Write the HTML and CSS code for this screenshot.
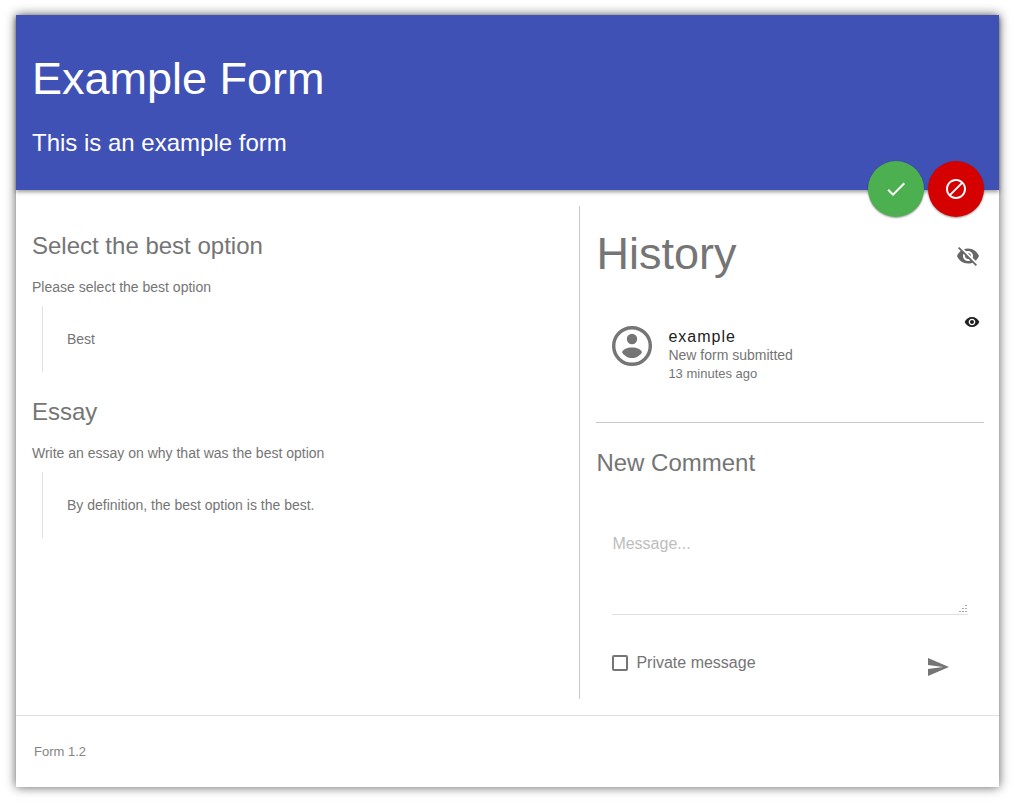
FILE: index.html
```html
<!DOCTYPE html>
<html lang="en">
<head>
<meta charset="utf-8">
<title>Example Form</title>
<link rel="stylesheet" href="styles.css">
</head>
<body>
<main class="card">
  <header class="banner">
    <h1>Example Form</h1>
    <p class="subtitle">This is an example form</p>
    <div class="actions">
      <button class="fab approve" aria-label="Approve"><svg viewBox="0 0 24 24"><path d="M9 16.17L4.83 12l-1.42 1.41L9 19 21 7l-1.41-1.41z"/></svg></button>
      <button class="fab deny" aria-label="Deny"><svg viewBox="0 0 24 24"><path d="M12 2C6.48 2 2 6.48 2 12s4.48 10 10 10 10-4.48 10-10S17.520 2 12 2zM4 12c0-4.420 3.580-8 8-8 1.850 0 3.550.630 4.900 1.690L5.690 16.900C4.630 15.550 4 13.850 4 12zm8 8c-1.850 0-3.550-.630-4.900-1.690L18.310 7.100C19.370 8.450 20 10.150 20 12c0 4.420-3.580 8-8 8z"/></svg></button>
    </div>
  </header>
  <div class="content">
    <div class="answers">
      <section class="question">
        <h2>Select the best option</h2>
        <p>Please select the best option</p>
        <blockquote>Best</blockquote>
      </section>
      <section class="question">
        <h2>Essay</h2>
        <p>Write an essay on why that was the best option</p>
        <blockquote>By definition, the best option is the best.</blockquote>
      </section>
    </div>
    <aside class="history">
      <div class="history-head">
        <h2 class="display">History</h2>
        <button class="icon-button" aria-label="Hide private events"><svg viewBox="0 0 24 24"><path d="M12 7c2.760 0 5 2.240 5 5 0 .650-.130 1.260-.360 1.830l2.920 2.920c1.510-1.260 2.700-2.890 3.430-4.750-1.730-4.390-6-7.500-11-7.500-1.400 0-2.740.250-3.980.700l2.160 2.160C10.740 7.130 11.350 7 12 7zM2 4.270l2.280 2.280.460.460C3.080 8.300 1.780 10.020 1 12c1.730 4.390 6 7.500 11 7.500 1.550 0 3.030-.300 4.380-.840l.420.420L19.730 22 21 20.730 3.270 3 2 4.270zM7.530 9.800l1.550 1.550c-.050.210-.080.430-.080.650 0 1.660 1.340 3 3 3 .220 0 .440-.030.650-.080l1.550 1.550c-.670.330-1.410.530-2.200.530-2.760 0-5-2.240-5-5 0-.790.200-1.530.530-2.200zm4.310-.780l3.150 3.150.020-.160c0-1.660-1.340-3-3-3l-.170.010z"/></svg></button>
      </div>
      <article class="event">
        <svg class="avatar" viewBox="0 0 40 40" aria-hidden="true"><circle cx="20" cy="20" r="18.300" fill="none" stroke="currentColor" stroke-width="3.400"/><circle cx="20" cy="13" r="5.200"/><path d="M20 21.500c5 0 9 2 10 4.700-2 3.500-6 5.800-10 5.800s-8-2.300-10-5.800c1-2.700 5-4.700 10-4.700z"/></svg>
        <div class="event-text">
          <h3>example</h3>
          <p class="event-title">New form submitted</p>
          <p class="event-time">13 minutes ago</p>
        </div>
        <svg class="visibility" viewBox="0 0 24 24" role="img" aria-label="Visible"><path d="M12 4.500C7 4.500 2.730 7.610 1 12c1.730 4.390 6 7.500 11 7.500s9.270-3.110 11-7.500c-1.730-4.390-6-7.500-11-7.500zM12 17c-2.760 0-5-2.240-5-5s2.240-5 5-5 5 2.240 5 5-2.240 5-5 5zm0-8c-1.660 0-3 1.340-3 3s1.340 3 3 3 3-1.340 3-3-1.340-3-3-3z"/></svg>
      </article>
      <form class="comment">
        <h2>New Comment</h2>
        <textarea placeholder="Message..." aria-label="Message"></textarea>
        <div class="comment-foot">
          <label><input type="checkbox">Private message</label>
          <button class="send" type="button" aria-label="Send"><svg viewBox="0 0 24 24"><path d="M2.010 21L23 12 2.010 3 2 10l15 2-15 2z"/></svg></button>
        </div>
      </form>
    </aside>
  </div>
  <footer>Form 1.2</footer>
</main>
</body>
</html>
```
FILE: styles.css
```css
* { box-sizing: border-box; }
body {
  margin: 0;
  padding: 15px 15px 15px 16px;
  background: #fff;
  color: #757575;
  font: 14px/20px "Liberation Sans", Arial, sans-serif;
}
h1, h2, h3, p, blockquote { margin: 0; font-weight: 400; }
svg { display: block; fill: currentColor; }
button { border: 0; padding: 0; background: none; color: inherit; cursor: pointer; }
.card { position: relative; background: #fff; box-shadow: 0 0 10px rgba(0, 0, 0, .65); }
.banner {
  position: relative;
  padding: 40px 16px 31px;
  background: #3f51b5;
  color: #fff;
  box-shadow: 0 2px 4px rgba(0, 0, 0, .4);
}
h1, .display { font-size: 45px; line-height: 48px; }
.subtitle { margin-top: 24px; font-size: 24px; line-height: 32px; }
.actions { position: absolute; right: 15px; bottom: -27px; display: flex; gap: 4px; }
.fab {
  display: grid;
  place-items: center;
  width: 56px;
  height: 56px;
  border-radius: 50%;
  color: #fff;
  box-shadow: 0 1px 2px rgba(0, 0, 0, .4);
}
.fab svg, .icon-button svg, .send svg { width: 24px; height: 24px; }
.approve { background: #4caf50; }
.deny { background: #d50000; }
.content {
  display: grid;
  grid-template-columns: minmax(0, 23fr) minmax(0, 17fr);
  padding: 16px 15px 16px 16px;
}
.answers { padding-right: 16px; }
.question { padding-top: 24px; }
h2 { font-size: 24px; line-height: 32px; }
.question p { margin-top: 15px; }
blockquote { margin: 9px 0 0 10px; padding: 23px 24px; border-left: 1px solid #e0e0e0; }
.history { padding-left: 16px; border-left: 1px solid #c8c8c8; }
.history-head { display: flex; align-items: center; justify-content: space-between; padding: 24px 4px 24px 0; }
.icon-button { padding-top: 4px; color: #666; }
.event { display: flex; gap: 16px; padding: 24px 4px 39px 16px; border-bottom: 1px solid #c8c8c8; }
.avatar { width: 40px; height: 40px; }
.event-text { flex: 1; padding-top: 1px; }
.event h3 { color: #212121; font-size: 16px; letter-spacing: 1px; }
.event-title { line-height: 17px; }
.event-time { font-size: 13px; line-height: 19px; }
.visibility { width: 16px; height: 16px; margin-top: -12px; color: #212121; }
.comment h2 { margin-top: 24px; }
textarea {
  display: block;
  width: calc(100% - 32px);
  height: 84px;
  margin: 52px 16px 0;
  padding: 3px 0;
  border: 0;
  border-bottom: 1px solid #e0e0e0;
  font: 16px/20px "Liberation Sans", Arial, sans-serif;
}
textarea::placeholder { color: #bdbdbd; }
textarea::-webkit-resizer {
  background:
    linear-gradient(135deg, #fff 58%, transparent 58%),
    conic-gradient(from 0deg at 2px 1px, transparent 75%, #aaa 75%) 0 0 / 3px 3px;
}
.comment-foot {
  display: flex;
  align-items: flex-start;
  justify-content: space-between;
  padding: 36px 34px 20px 16px;
  font-size: 16px;
  line-height: 23px;
}
.comment-foot label { display: flex; align-items: center; gap: 8px; }
.send { padding-top: 4px; }
input { appearance: none; width: 16px; height: 16px; margin: 0; border: 2px solid #757575; border-radius: 2px; }
input:checked { background: #3f51b5; }
footer { padding: 26px 18px 25px; border-top: 1px solid #e0e0e0; color: #858585; font-size: 13px; }
```
